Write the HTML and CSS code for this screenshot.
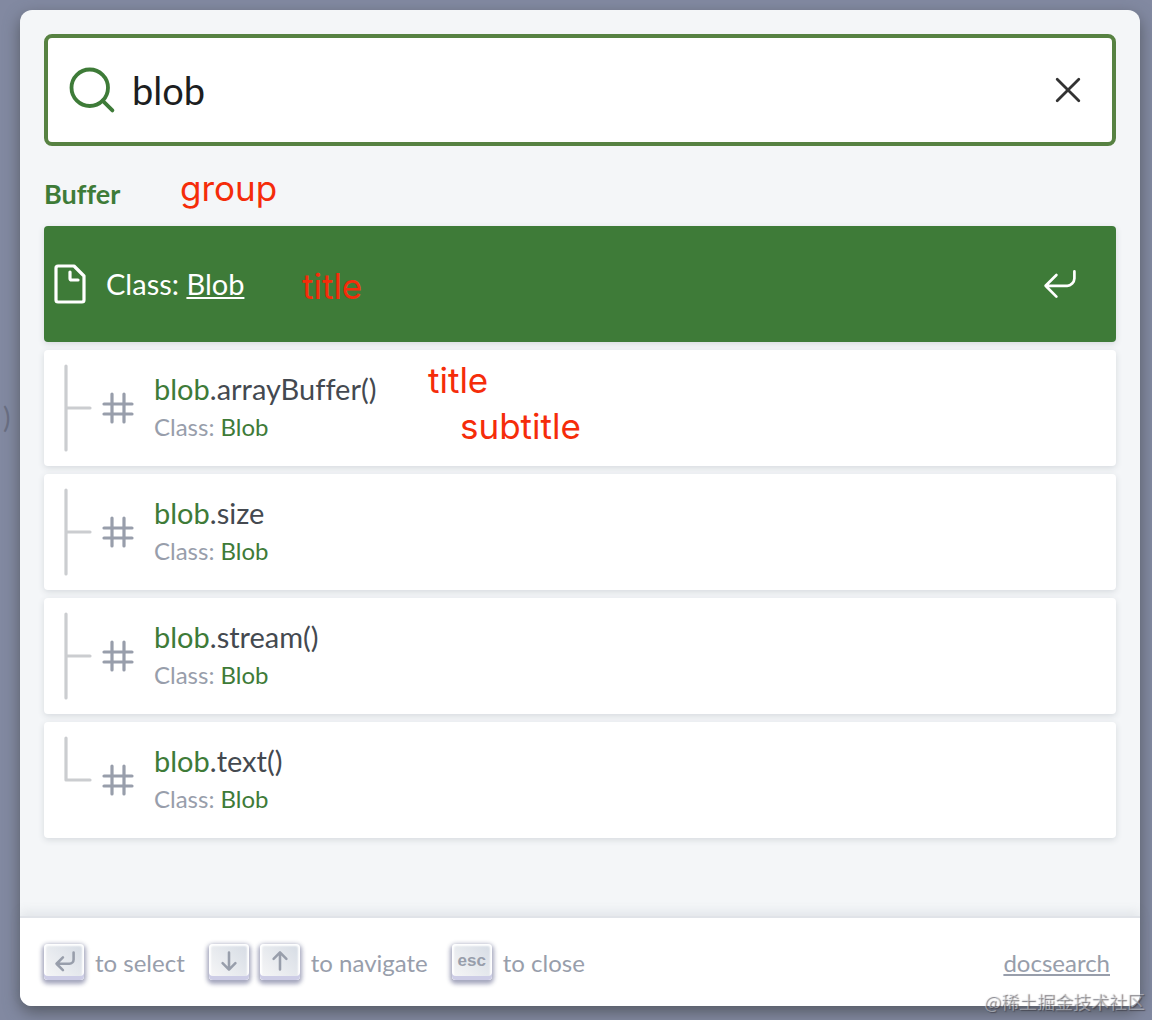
FILE: index.html
```html
<!DOCTYPE html>
<html lang="en">
<head>
    <meta charset="UTF-8">
    <meta name="viewport" content="width=device-width, initial-scale=1.0">
    <title>docsearch</title>
    <link rel="stylesheet" href="styles.css">
</head>
<body>
    <!-- shared icons -->
    <svg class="sprite" aria-hidden="true">
        <symbol id="hash" viewBox="0 0 20 20">
            <path d="M13 13h4-4V8H7v5h6v4-4H7V8H3h4V3v5h6V3v5h4-4v5zm-6 0v4-4H3h4z"/>
        </symbol>
        <symbol id="tree" viewBox="0 0 24 54">
            <path d="M8 6v42M20 27H8.3"/>
        </symbol>
        <symbol id="tree-last" viewBox="0 0 24 54">
            <path d="M8 6v21M20 27H8.3"/>
        </symbol>
    </svg>

    <span class="page-text">)</span>

    <div class="modal">
        <form class="search-form">
            <label for="search">
                <svg class="search-icon" viewBox="0 0 20 20" role="img" aria-label="Search">
                    <circle cx="9.06" cy="9.06" r="7.6"/>
                    <path d="M14.4 14.4l4.1 4.1"/>
                </svg>
            </label>
            <input id="search" class="search-input" type="text" value="blob" autocomplete="off" spellcheck="false">
            <button class="reset" type="reset" aria-label="Clear the query">
                <svg class="icon" viewBox="0 0 20 20"><path d="M4.6 4.6l10.8 10.8M15.4 4.6L4.6 15.4"/></svg>
            </button>
        </form>

        <main class="results">
            <h2 class="group">Buffer <span class="note note-group">group</span></h2>
            <ul class="hits">
                <li class="hit">
                    <a class="hit-link selected" href="#blob">
                        <svg class="icon icon-bold" viewBox="0 0 20 20"><path d="M17 6v12c0 .52-.2 1-1 1H4c-.7 0-1-.33-1-1V2c0-.55.42-1 1-1h8l5 5zM14 8h-3.13c-.51 0-.87-.34-.87-.87V4"/></svg>
                        <span class="hit-text">
                            <span class="hit-title">Class: <mark>Blob</mark></span>
                        </span>
                        <svg class="enter" viewBox="0 0 20 20"><path d="M18 3v4c0 2-2 4-4 4H2M8 17l-6-6 6-6"/></svg>
                    </a>
                    <span class="note note-selected">title</span>
                </li>
                <li class="hit">
                    <a class="hit-link" href="#array-buffer">
                        <svg class="tree"><use href="#tree"/></svg>
                        <svg class="icon icon-bold"><use href="#hash"/></svg>
                        <span class="hit-text">
                            <span class="hit-title"><mark>blob</mark>.arrayBuffer()</span>
                            <span class="hit-path">Class: <mark>Blob</mark></span>
                        </span>
                    </a>
                    <span class="note note-title">title</span>
                    <span class="note note-subtitle">subtitle</span>
                </li>
                <li class="hit">
                    <a class="hit-link" href="#size">
                        <svg class="tree"><use href="#tree"/></svg>
                        <svg class="icon icon-bold"><use href="#hash"/></svg>
                        <span class="hit-text">
                            <span class="hit-title"><mark>blob</mark>.size</span>
                            <span class="hit-path">Class: <mark>Blob</mark></span>
                        </span>
                    </a>
                </li>
                <li class="hit">
                    <a class="hit-link" href="#stream">
                        <svg class="tree"><use href="#tree"/></svg>
                        <svg class="icon icon-bold"><use href="#hash"/></svg>
                        <span class="hit-text">
                            <span class="hit-title"><mark>blob</mark>.stream()</span>
                            <span class="hit-path">Class: <mark>Blob</mark></span>
                        </span>
                    </a>
                </li>
                <li class="hit">
                    <a class="hit-link" href="#text">
                        <svg class="tree"><use href="#tree-last"/></svg>
                        <svg class="icon icon-bold"><use href="#hash"/></svg>
                        <span class="hit-text">
                            <span class="hit-title"><mark>blob</mark>.text()</span>
                            <span class="hit-path">Class: <mark>Blob</mark></span>
                        </span>
                    </a>
                </li>
            </ul>
        </main>

        <footer class="footer">
            <ul class="commands">
                <li>
                    <kbd class="key"><svg viewBox="0 0 15 15" role="img" aria-label="Enter key"><path d="M12 3.5v3.3c0 1-.8 2-2 2H4M7 11.8l-3-3 3-3"/></svg></kbd>
                    <span>to select</span>
                </li>
                <li>
                    <kbd class="key"><svg viewBox="0 0 15 15" role="img" aria-label="Arrow down"><path d="M7.5 3.5v8M10.5 8.5l-3 3-3-3"/></svg></kbd>
                    <kbd class="key"><svg viewBox="0 0 15 15" role="img" aria-label="Arrow up"><path d="M7.5 11.5v-8M10.5 6.5l-3-3-3 3"/></svg></kbd>
                    <span>to navigate</span>
                </li>
                <li>
                    <kbd class="key">esc</kbd>
                    <span>to close</span>
                </li>
            </ul>
            <a class="provider" href="#docsearch">docsearch</a>
        </footer>
    </div>

    <span class="watermark">@稀土掘金技术社区</span>
</body>
</html>
```

FILE: styles.css
```css
:root {
    --green: #3e7b38;
    --muted: #989eab;
    --text: #444950;
    --red: #f52c0a;
}

* {
    box-sizing: border-box;
}

body {
    position: relative;
    display: flex;
    min-height: 100vh;
    margin: 0;
    padding: 10px 12px 14px 20px;
    overflow: hidden;
    background: #8289a1;
    color: var(--text);
    font-family: Lato, "Noto Sans CJK SC", sans-serif;
    font-variant-ligatures: none;
}

ul {
    margin: 0;
    padding: 0;
    list-style: none;
}

svg {
    display: block;
    flex: none;
    fill: none;
    stroke: currentColor;
    stroke-linecap: round;
    stroke-linejoin: round;
}

mark {
    background: none;
    color: var(--green);
}

.sprite {
    position: absolute;
    width: 0;
    height: 0;
}

/* page behind the overlay */
.page-text {
    position: absolute;
    top: 400px;
    left: 3px;
    color: #696e82;
    font-size: 28px;
}

.modal {
    position: relative;
    display: flex;
    flex: 1;
    flex-direction: column;
    border-radius: 12px;
    background: #f4f6f8;
    box-shadow: 0 6px 16px 0 #555a64;
}

/* search box */
.search-form {
    display: flex;
    align-items: center;
    height: 112px;
    margin: 24px 24px 0;
    padding: 0 24px 0 20px;
    border: 4px solid #578242;
    border-radius: 8px;
    background: #fff;
}

.search-icon {
    width: 48px;
    height: 48px;
    color: var(--green);
    stroke-width: 1.6;
}

.search-input {
    flex: 1;
    min-width: 0;
    height: 100%;
    padding: 0 0 0 16px;
    border: 0;
    outline: 0;
    background: none;
    color: #1c1e21;
    font: 38px Lato, sans-serif;
}

.reset {
    padding: 0;
    border: 0;
    background: none;
    color: #333;
}

.icon {
    width: 40px;
    height: 40px;
    stroke-width: 1.4;
}

.icon-bold {
    stroke-width: 1.6;
}

/* results */
.results {
    flex: 1;
    padding: 0 24px 24px;
}

.group {
    position: relative;
    margin: 0;
    padding: 32px 0 16px;
    color: var(--green);
    font-size: 27px;
    line-height: 32px;
}

.hits {
    display: flex;
    flex-direction: column;
    gap: 8px;
}

.hit {
    position: relative;
}

.hit-link {
    display: flex;
    align-items: center;
    height: 116px;
    padding: 0 38px 0 6px;
    border-radius: 4px;
    background: #fff;
    box-shadow: 0 2px 6px 0 #d6dade;
    color: var(--muted);
    text-decoration: none;
}

.tree {
    width: 48px;
    height: 108px;
    color: #cbcdd0;
    stroke-width: 1.6;
}

.enter {
    width: 36px;
    height: 36px;
    stroke-width: 1.5;
}

.hit-text {
    display: flex;
    flex: 1;
    flex-direction: column;
    padding-left: 16px;
}

.hit-title {
    color: var(--text);
    font-size: 29px;
    line-height: 38px;
}

.hit-path {
    font-size: 24px;
    line-height: 38px;
}

.selected {
    background: var(--green);
}

.selected,
.selected .hit-title,
.selected mark {
    color: #fff;
}

.selected mark {
    text-decoration: underline;
}

/* red notes over the results */
.note {
    position: absolute;
    color: var(--red);
    font: 35px/40px Inter, sans-serif;
}

.note-group {
    top: 22px;
    left: 136px;
}

.note-selected {
    top: 40px;
    left: 258px;
}

.note-title {
    top: 10px;
    left: 384px;
}

.note-subtitle {
    top: 56px;
    left: 416px;
}

/* footer */
.footer {
    display: flex;
    align-items: center;
    justify-content: space-between;
    height: 88px;
    padding: 0 30px 0 24px;
    border-radius: 0 0 12px 12px;
    background: #fff;
    box-shadow: 0 -2px 0 0 #e0e3e8, 0 -6px 12px 0 rgba(90, 105, 125, 0.12);
    color: var(--muted);
    font-size: 24px;
}

.commands {
    display: flex;
    gap: 24px;
}

.commands li {
    display: flex;
    align-items: center;
    gap: 11px;
}

.key {
    display: flex;
    align-items: center;
    justify-content: center;
    width: 40px;
    height: 36px;
    padding-bottom: 2px;
    border-radius: 4px;
    background: linear-gradient(-135deg, #d5dbe4, #f8f8f8);
    box-shadow: inset 0 -4px 0 0 #cdcde6, inset 0 0 2px 2px #fff, 0 2px 4px 2px rgba(30, 35, 90, 0.4);
    font: bold 17px "Liberation Sans", sans-serif;
}

.key svg {
    width: 32px;
    height: 32px;
    stroke-width: 1.2;
}

.provider {
    color: var(--muted);
}

.watermark {
    position: absolute;
    right: 7px;
    bottom: 7px;
    color: rgba(255, 255, 255, 0.4);
    font: 18px/24px "Noto Sans CJK SC", sans-serif;
    text-shadow: 1px 1px 1px rgba(60, 60, 70, 0.7);
}
```
